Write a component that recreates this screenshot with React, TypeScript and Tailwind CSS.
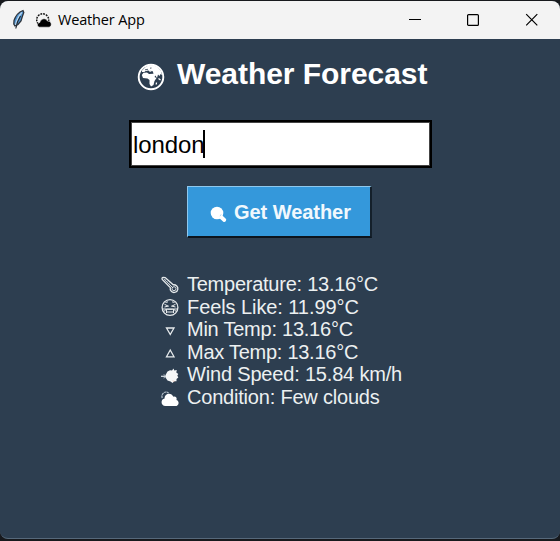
import type { ReactNode } from 'react';

const ICON = 'block shrink-0 overflow-visible';

function Feather() {
  return (
    <svg className={ICON} width="14" height="22" viewBox="0 0 14 22">
      <path d="M11 1.500C7 3 3.500 7 2 11.500L1.800 15L3 17L6 15.500L9 12L10.500 7L11.800 3.500Z" fill="#4a90cf" stroke="#30353c" strokeWidth="1.300" />
      <path d="M9.800 3.500C6.500 7 4.800 11 3.500 16" fill="none" stroke="#b7d4ec" strokeWidth="1.400" />
      <path d="M8.500 7C6 11 4.500 14 3.800 19.500" fill="none" stroke="#222a33" strokeWidth="1.200" />
    </svg>
  );
}

function SunCloud() {
  return (
    <svg className={ICON} width="17" height="16" viewBox="0 0 17 16">
      <circle cx="7.700" cy="6.800" r="6" fill="none" stroke="#111" strokeWidth="1.500" strokeDasharray="1.800 1" />
      <path d="M4.500 14.200C1.500 13.600 2 9.600 4.800 9.500C5.600 5.300 11 4.500 12.500 8.100C16.500 7.600 17.800 13.200 14.200 14.200Z" fill="#000" stroke="#f3f3f3" strokeWidth="0.600" />
    </svg>
  );
}

function Globe() {
  return (
    <svg className={ICON} width="28" height="28" viewBox="0 0 28 28">
      <circle cx="14" cy="14" r="12.300" fill="#2d3e50" stroke="#fff" strokeWidth="1.900" />
      <path d="M5 7.500L9 3.500L14 2L20 3.500L24 8L25 12L23.500 11L22.500 13L21 11.500L20 15L18.500 12.500L17.500 14L19.500 15L17.500 18L16.500 22L14 23.500L12.500 21L12.500 17L10.500 15.500L6 15L4.800 12L6.500 9.800L10 9.500L12 11L16.500 10.800L16 9L13 9L11.500 7.500L9.500 8L7.500 9L5 9Z" fill="#fff" />
      <path d="M8 7L10.500 5.800M12.500 7L15 7.400M19.500 19.500L19.200 21.500M21.500 15.500L23.500 17" stroke="#fff" strokeWidth="1.300" />
      <path d="M8 6.800L11 6.300M13 5.200L14.500 5M7.800 8.800L10.500 8.200M13.500 8.300L16 8.700" stroke="#2d3e50" strokeWidth="0.800" />
    </svg>
  );
}

function Magnifier() {
  return (
    <svg className={ICON} width="17" height="17" viewBox="0 0 17 17">
      <circle cx="7" cy="7" r="6.300" fill="#fff" />
      <path d="M10.500 10.500L14.300 14" stroke="#fff" strokeWidth="3.800" strokeLinecap="round" />
      <path d="M11.200 8.300L10 10.200" stroke="#8cc4ea" strokeWidth="0.600" />
    </svg>
  );
}

function Thermometer() {
  return (
    <svg className={ICON} width="18" height="18" viewBox="0 0 18 18" fill="none" stroke="#e6eaec">
      <path d="M1.200 3.400Q.5 1.500 2.200 1.400L4.200 1.600L12.200 8.800C15 8.500 17.300 10.900 16.800 13.400C16.300 16.300 12.600 17.400 10.500 15.500C9.200 14.400 8.900 13 9.300 11.600Z" strokeWidth="1.300" />
      <path d="M3 3.200L12 12" strokeWidth="0.900" />
      <circle cx="13" cy="12.700" r="2" strokeWidth="0.900" />
      <path d="M5.500 2.500L4.700 3.700M7.500 4.300L6.800 5.500M9.500 6.100L8.700 7.300" strokeWidth="0.700" />
    </svg>
  );
}

function HotFace() {
  return (
    <svg className={ICON} width="18" height="18" viewBox="0 0 18 18" fill="none" stroke="#e6eaec">
      <circle cx="9" cy="9.500" r="7.900" strokeWidth="1.300" />
      <path d="M3.500 6.300L7.500 8.300M14.500 6.300L10.500 8.300M3.500 9L7.500 8M14.500 9L10.500 8M4.500 4.500L7 3.800M11 3.800L13.500 4.500" strokeWidth="1" />
      <path d="M2 11H16M3.200 13.500Q4 11 6.500 11.300H11.500Q14 11 14.800 13.500M5.500 15V12M12.500 15V12M5.500 14H12.500" strokeWidth="1" />
    </svg>
  );
}

function DownTriangle() {
  return (
    <svg className={ICON} width="18" height="18" viewBox="0 0 18 18" fill="none" stroke="#e6eaec" strokeWidth="1.300">
      <path d="M5.500 7H13L9.250 13.500Z" />
    </svg>
  );
}

function UpTriangle() {
  return (
    <svg className={ICON} width="18" height="18" viewBox="0 0 18 18" fill="none" stroke="#e6eaec" strokeWidth="1.300">
      <path d="M5.500 12.800H13L9.250 6Z" />
    </svg>
  );
}

function WindFace() {
  return (
    <svg className={ICON} width="18" height="18" viewBox="0 0 18 18">
      <path d="M4.800 8.500L6.500 5.500L9 4.300L11 4.500L12.500 2.500L13.300 4.500L15.800 4L15.300 6.500L17.300 8L16.300 9.500L17.300 11.500L15.500 13L15.500 15.300L13.300 15.300L11.500 17L9.500 15.500L6.500 14.500L4.800 12Z" fill="#f5f7f8" />
      <path d="M0 10.300H5" stroke="#dce3e8" strokeWidth="1.200" />
      <path d="M2.500 8.800L4.800 9.500M2.500 12L4.800 11.200" stroke="#dce3e8" strokeWidth="0.700" />
      <path d="M12 14.500L13.500 16" stroke="#e6a58c" strokeWidth="0.700" />
    </svg>
  );
}

function CloudSun() {
  return (
    <svg className={ICON} width="18" height="18" viewBox="0 0 18 18">
      <path d="M1.200 9C-.2 4.500 4.500 1.300 7.500 4" fill="none" stroke="#b9c5cf" strokeWidth="1.200" strokeDasharray="2.500 .6" />
      <path d="M4.500 17C-.7 16.800-.4 10 3.600 9.500C3.400 4.200 10.500 3 12.300 7.700C15 7.200 16.200 9.200 15.500 10.900C18.800 12 18 17 14.500 17Z" fill="#fff" />
    </svg>
  );
}

function Reading({ icon, children }: { icon: ReactNode; children: ReactNode }) {
  return (
    <li className="flex h-[22.6px] items-center gap-[8px] whitespace-nowrap">
      <span className="pt-px">{icon}</span>
      {children}
    </li>
  );
}

export default function App() {
  return (
    <div className="h-[541px] w-[560px] overflow-hidden bg-[#17191d] pt-px pb-[2px] font-['Liberation_Sans',Arial,sans-serif]">
      <div className="flex h-[538px] flex-col overflow-hidden rounded-lg border-b border-[#56687a] bg-[#2d3e50]">
        <header className="flex h-[38px] shrink-0 items-center bg-[#f3f3f3] pl-[12px] text-black">
          <Feather />
          <div className="ml-[9px] pt-px">
            <SunCloud />
          </div>
          <span className="ml-[6px] w-[100px] font-['Open_Sans',sans-serif] text-[14.5px] leading-[20px] tracking-[-0.16px] whitespace-nowrap">Weather App</span>
          <div className="ml-auto flex items-center gap-[46px] pr-[22px]">
            <svg className={ICON} width="13" height="14" viewBox="0 0 13 14">
              <path d="M1 6.500H13" stroke="#000" />
            </svg>
            <svg className={ICON} width="12" height="14" viewBox="0 0 12 14">
              <rect x=".6" y="1.600" width="10.800" height="10.800" rx="1" fill="none" stroke="#000" strokeWidth="1.200" />
            </svg>
            <svg className={ICON} width="13" height="14" viewBox="0 0 13 14">
              <path d="M1.200 1.200L12.300 12.300M12.300 1.200L1.200 12.300" stroke="#000" strokeWidth="1.200" />
            </svg>
          </div>
        </header>
        <main className="flex grow flex-col">
          <div className="mt-[17px] ml-[137px] flex h-[36px] items-center gap-[12px]">
            <div className="pt-[6px]">
              <Globe />
            </div>
            <h1 className="text-[30px] leading-[36px] font-bold tracking-[-0.05px] whitespace-nowrap text-white">Weather Forecast</h1>
          </div>
          <div className="mt-[28px] ml-[129px] flex h-[48px] w-[303px] items-center border-2 border-black bg-white pl-[2px] text-[24px] leading-[30px] text-black ring-1 ring-[#444] ring-inset">
            <span className="pt-px tracking-[-0.1px]">london</span>
            <span className="-ml-px h-[28px] w-[2px] bg-black" />
          </div>
          <button className="mt-[18px] ml-[187px] flex h-[52px] w-[185px] items-center border-t border-r-2 border-b-2 border-l border-t-[#8fc8ed] border-r-[#14202b] border-b-[#0c141c] border-l-[#8fc8ed] bg-[#3498db] pl-[22px] text-[20px] font-bold text-[#f1f8fd]">
            <span className="pt-[6px]">
              <Magnifier />
            </span>
            <span className="ml-[7px] leading-[24px] tracking-[-0.05px] whitespace-nowrap">Get Weather</span>
          </button>
          <ul className="mt-[35px] ml-[161px] text-[20px] leading-[22.6px] text-[#ecf0f1]">
            <Reading icon={<Thermometer />}>
              <span className="tracking-[-0.25px]">Temperature: 13.16°C</span>
            </Reading>
            <Reading icon={<HotFace />}>
              <span className="tracking-[-0.08px]">Feels Like: 11.99°C</span>
            </Reading>
            <Reading icon={<DownTriangle />}>
              <span className="tracking-[-0.24px]">Min Temp: 13.16°C</span>
            </Reading>
            <Reading icon={<UpTriangle />}>
              <span className="tracking-[-0.26px]">Max Temp: 13.16°C</span>
            </Reading>
            <Reading icon={<WindFace />}>
              <span className="tracking-[-0.18px]">Wind Speed: 15.84 km/h</span>
            </Reading>
            <Reading icon={<CloudSun />}>
              <span className="tracking-[-0.2px]">Condition: Few clouds</span>
            </Reading>
          </ul>
        </main>
      </div>
    </div>
  );
}
